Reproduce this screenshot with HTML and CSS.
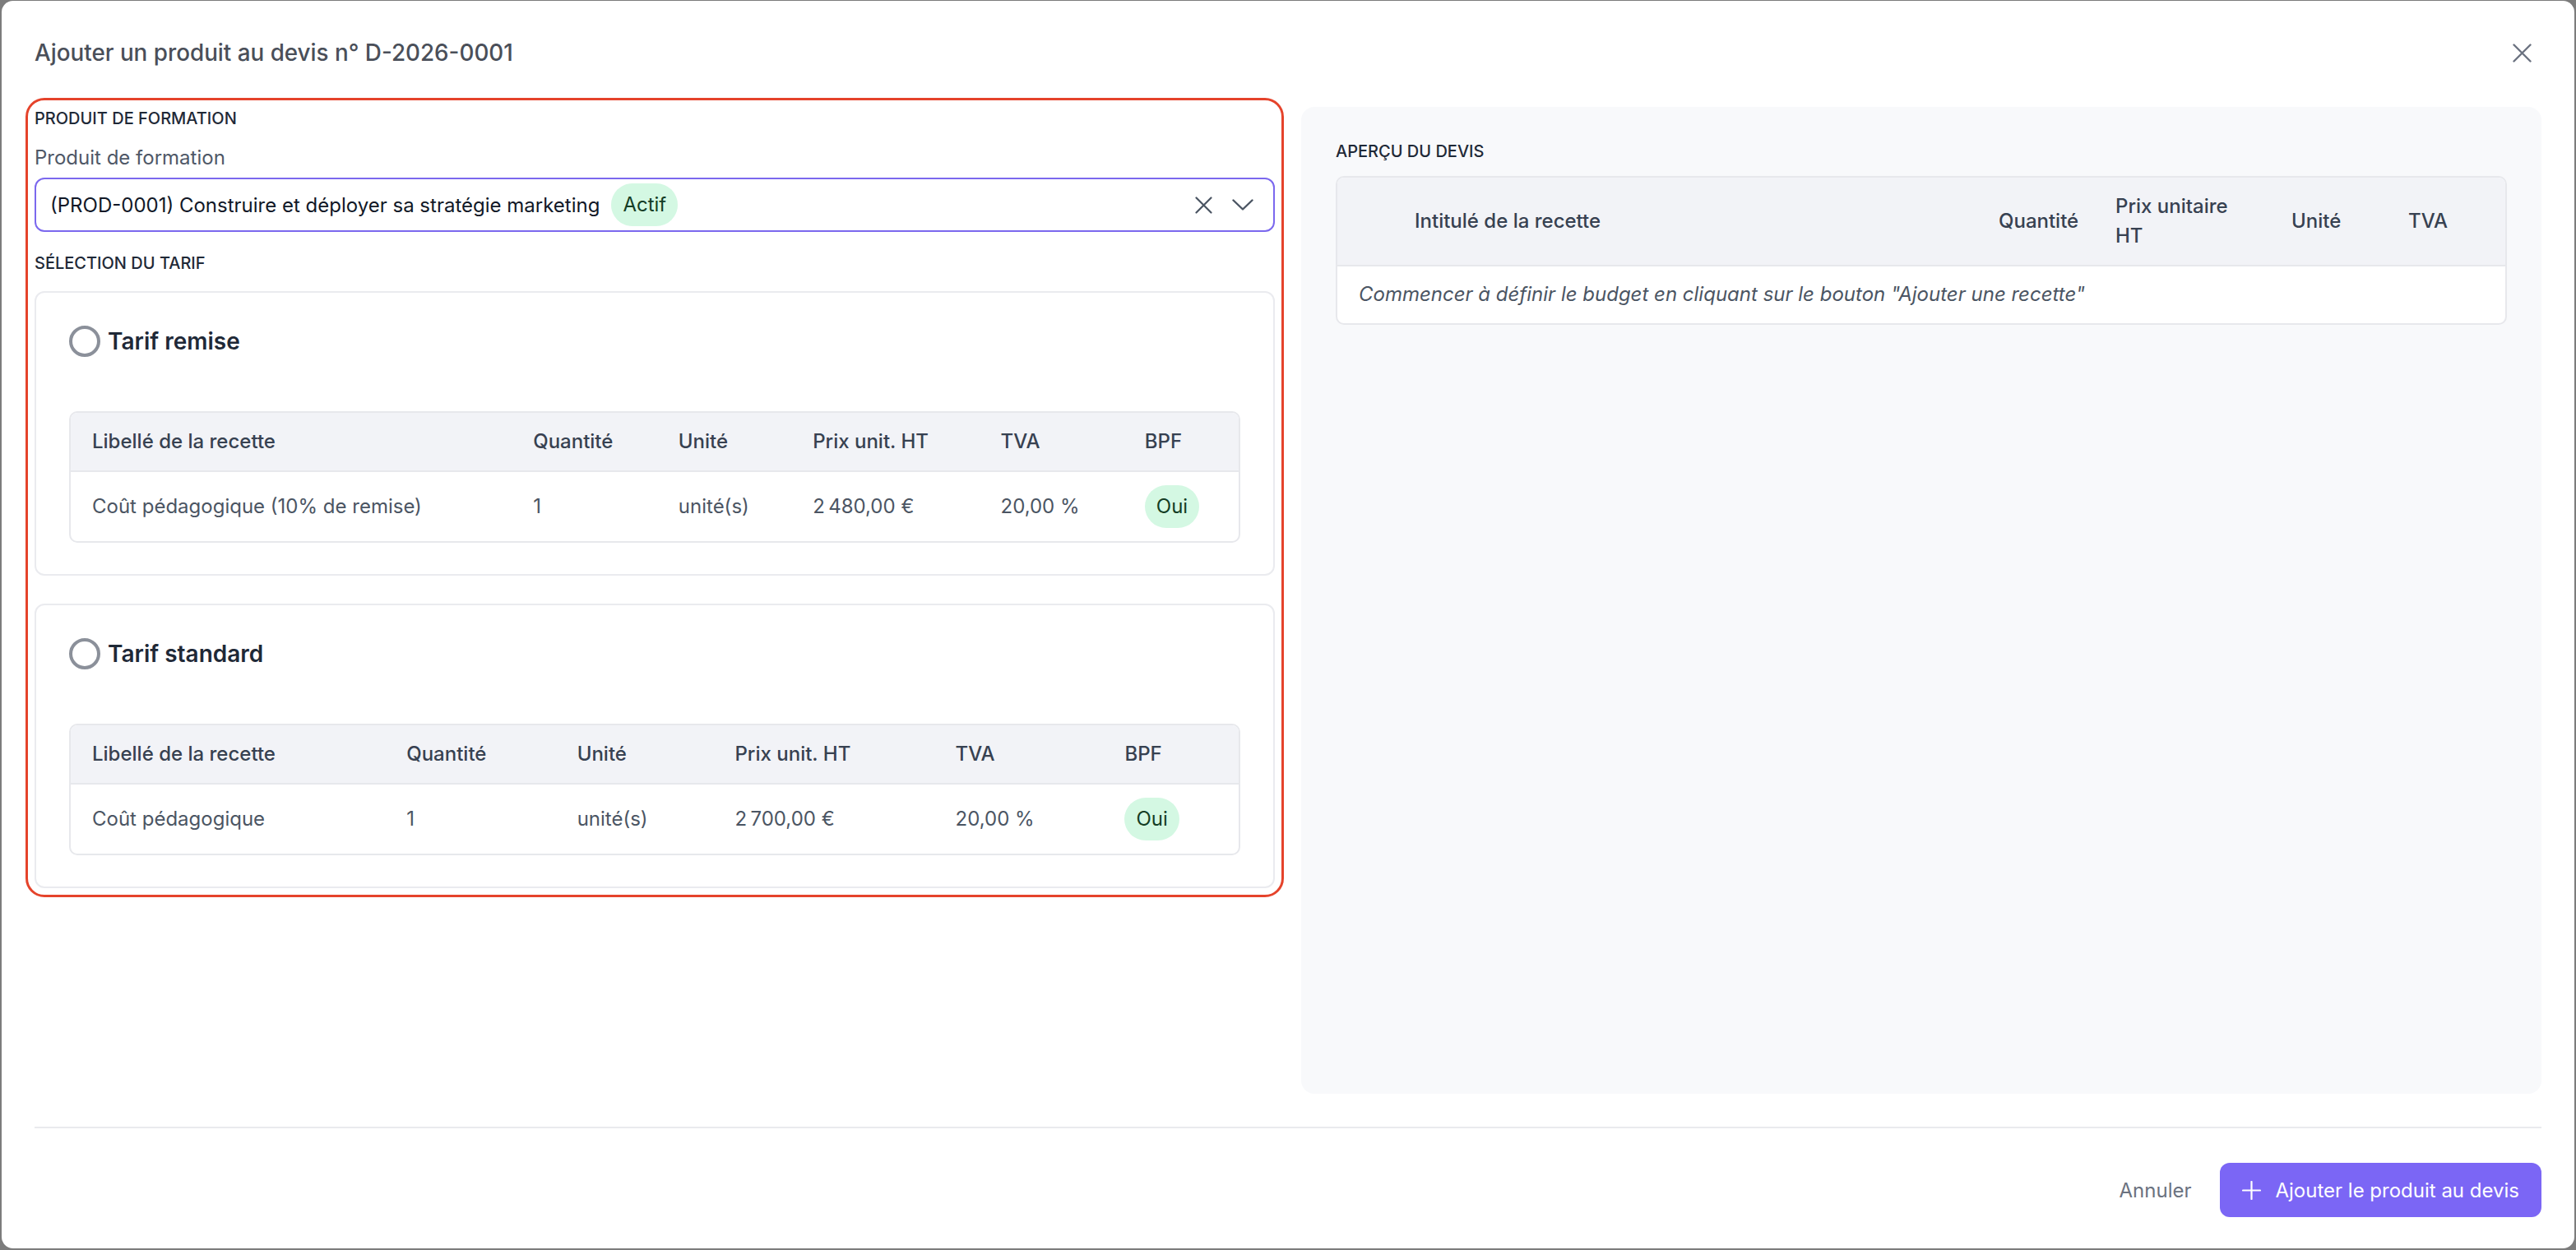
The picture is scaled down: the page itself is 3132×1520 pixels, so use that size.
FILE: index.html
```html
<!DOCTYPE html>
<html lang="fr">
<head>
  <meta charset="UTF-8">
  <meta name="viewport" content="width=device-width, initial-scale=1.0">
  <title>Ajouter un produit au devis</title>
  <link rel="stylesheet" href="styles.css">
</head>
<body>
  <div class="modal">
    <div class="modal-header">
      <h1 class="modal-title">Ajouter un produit au devis n° D-2026-0001</h1>
      <button class="close-btn" aria-label="Fermer">
        <svg width="23" height="23" viewBox="0 0 23 23"><path d="M1.5 1.5L21.5 21.5M21.5 1.5L1.5 21.5" stroke="#6b7280" stroke-width="2.4" stroke-linecap="round" fill="none"/></svg>
      </button>
    </div>

    <div class="modal-body">
      <!-- colonne gauche : produit + tarifs -->
      <div class="left-col">
        <h2 class="section-title">Produit de formation</h2>
        <label class="field-label">Produit de formation</label>
        <div class="select-box">
          <span class="select-value">(PROD-0001) Construire et déployer sa stratégie marketing</span>
          <span class="badge">Actif</span>
          <span class="select-icons">
            <svg width="21" height="21" viewBox="0 0 21 21"><path d="M1.5 1.5L19.5 19.5M19.5 1.5L1.5 19.5" stroke="#4b5563" stroke-width="2.2" stroke-linecap="round" fill="none"/></svg>
            <svg width="26" height="14" viewBox="0 0 26 14"><path d="M1.5 1.5L13 12.5L24.5 1.5" stroke="#4b5563" stroke-width="2.4" stroke-linecap="round" stroke-linejoin="round" fill="none"/></svg>
          </span>
        </div>

        <h2 class="section-title tarif-title">Sélection du tarif</h2>

        <div class="tarif-card">
          <div class="tarif-head">
            <span class="radio"></span>
            <span class="tarif-name">Tarif remise</span>
          </div>
          <div class="table-wrap">
            <table class="data-table">
              <thead>
                <tr>
                  <th>Libellé de la recette</th>
                  <th>Quantité</th>
                  <th>Unité</th>
                  <th>Prix unit. HT</th>
                  <th>TVA</th>
                  <th>BPF</th>
                </tr>
              </thead>
              <tbody>
                <tr>
                  <td>Coût pédagogique (10% de remise)</td>
                  <td>1</td>
                  <td>unité(s)</td>
                  <td>2&#8239;480,00 €</td>
                  <td>20,00 %</td>
                  <td><span class="badge">Oui</span></td>
                </tr>
              </tbody>
            </table>
          </div>
        </div>

        <div class="tarif-card second">
          <div class="tarif-head">
            <span class="radio"></span>
            <span class="tarif-name">Tarif standard</span>
          </div>
          <div class="table-wrap">
            <table class="data-table">
              <thead>
                <tr>
                  <th>Libellé de la recette</th>
                  <th>Quantité</th>
                  <th>Unité</th>
                  <th>Prix unit. HT</th>
                  <th>TVA</th>
                  <th>BPF</th>
                </tr>
              </thead>
              <tbody>
                <tr>
                  <td>Coût pédagogique</td>
                  <td>1</td>
                  <td>unité(s)</td>
                  <td>2&#8239;700,00 €</td>
                  <td>20,00 %</td>
                  <td><span class="badge">Oui</span></td>
                </tr>
              </tbody>
            </table>
          </div>
        </div>
      </div>

      <!-- colonne droite : aperçu -->
      <div class="preview">
        <h2 class="section-title">Aperçu du devis</h2>
        <div class="table-wrap">
          <table class="preview-table">
            <colgroup>
              <col class="c-handle">
              <col>
              <col class="c-small">
              <col class="c-price">
              <col class="c-small">
              <col class="c-small">
            </colgroup>
            <thead>
              <tr>
                <th></th>
                <th class="first">Intitulé de la recette</th>
                <th>Quantité</th>
                <th>Prix unitaire HT</th>
                <th>Unité</th>
                <th>TVA</th>
              </tr>
            </thead>
            <tbody>
              <tr>
                <td colspan="6" class="empty">Commencer à définir le budget en cliquant sur le bouton "Ajouter une recette"</td>
              </tr>
            </tbody>
          </table>
        </div>
      </div>
    </div>

    <div class="modal-footer">
      <button class="btn-cancel">Annuler</button>
      <button class="btn-primary">
        <svg width="23" height="23" viewBox="0 0 23 23"><path d="M11.5 1V22M1 11.5H22" stroke="#fff" stroke-width="2.2" stroke-linecap="round" fill="none"/></svg>
        Ajouter le produit au devis
      </button>
    </div>
  </div>
</body>
</html>
```

FILE: styles.css
```css
/* Base */
body {
  margin: 0;
  background-color: #7c7c7c;
  font-family: Inter, "Noto Sans", Arial, sans-serif;
  color: #1f2937;
}
button {
  font-family: inherit;
  border: none;
  background: none;
  cursor: pointer;
}

/* Modal */
.modal {
  margin: 1px 2px;
  height: 1517px;
  background-color: #fff;
  border-radius: 14px;
  display: flex;
  flex-direction: column;
  box-sizing: border-box;
}
.modal-header {
  display: flex;
  align-items: center;
  justify-content: space-between;
  padding: 43px 52px 0 40px;
  margin-bottom: 46px;
}
.modal-title {
  margin: 0;
  font-size: 27.8px;
  line-height: 40px;
  font-weight: 500;
  color: #4a4f59;
}
.close-btn {
  padding: 0;
  display: flex;
}

.modal-body {
  flex: 1;
  display: grid;
  grid-template-columns: 1fr 1fr;
  gap: 32px;
  padding: 0 40px;
}

/* Left column */
.left-col {
  align-self: start;
  border-radius: 12px;
  outline: 3px solid #e5432b;
  outline-offset: 8px;
}
.section-title {
  margin: 0;
  font-size: 20px;
  line-height: 28px;
  font-weight: 500;
  text-transform: uppercase;
  color: #1f2937;
}
.field-label {
  display: block;
  margin-top: 16px;
  font-size: 24px;
  line-height: 36px;
  color: #4f5867;
}
.select-box {
  margin-top: 6px;
  height: 66px;
  box-sizing: border-box;
  border: 2px solid #7b68ee;
  border-radius: 12px;
  display: flex;
  align-items: center;
  padding: 0 24px 0 17px;
  gap: 14px;
}
.select-value {
  font-size: 24px;
  color: #111827;
}
.select-icons {
  margin-left: auto;
  display: flex;
  align-items: center;
  gap: 24px;
}
.badge {
  display: inline-block;
  vertical-align: middle;
  padding: 8px 14px;
  font-size: 24px;
  line-height: 36px;
  border-radius: 999px;
  background-color: #d4f8e3;
  color: #143d25;
}
.tarif-title {
  margin-top: 24px;
}

.tarif-card {
  margin-top: 20px;
  border: 2px solid #eaebef;
  border-radius: 12px;
  padding: 39px 40px 38px;
}
.tarif-card.second {
  margin-top: 34px;
}
.tarif-head {
  display: flex;
  align-items: center;
  gap: 9px;
  height: 40px;
  margin-bottom: 65px;
}
.radio {
  width: 38px;
  height: 38px;
  box-sizing: border-box;
  border: 4px solid #8b909a;
  border-radius: 50%;
}
.tarif-name {
  font-size: 28px;
  font-weight: 600;
  color: #1f2937;
}

/* Tables */
.table-wrap {
  border: 2px solid #e7e8ec;
  border-radius: 10px;
  overflow: hidden;
  background-color: #fff;
}
.data-table,
.preview-table {
  width: 100%;
  border-collapse: collapse;
  font-size: 24px;
  line-height: 36px;
}
.data-table th,
.preview-table th {
  background-color: #f2f3f7;
  font-weight: 500;
  color: #374151;
  text-align: left;
  border-bottom: 2px solid #e7e8ec;
}
.data-table th,
.data-table td {
  padding: 17px 26px;
  text-align: left;
  white-space: nowrap;
}
.data-table td {
  padding: 16px 26px;
  color: #4b5563;
}

/* Right column */
.preview {
  background-color: #f8f9fb;
  border-radius: 16px;
  padding: 40px 42px;
}
.preview .table-wrap {
  margin-top: 16px;
}
.preview-table {
  table-layout: fixed;
}
.c-handle { width: 68px; }
.c-small { width: 142px; }
.c-price { width: 214px; }
.preview-table th {
  padding: 17px 24px;
}
.preview-table th.first {
  padding-left: 26px;
}
.preview-table td.empty {
  padding: 16px 26px 17px;
  font-style: italic;
  color: #4b5563;
}

/* Footer */
.modal-footer {
  margin: 40px 40px 0;
  border-top: 2px solid #e9eaee;
  padding: 42px 0 38px;
  display: flex;
  justify-content: flex-end;
  align-items: center;
  gap: 17px;
}
.btn-cancel {
  font-size: 24px;
  color: #6b7280;
  padding: 0 18px;
}
.btn-primary {
  height: 66px;
  display: flex;
  align-items: center;
  gap: 17px;
  padding: 0 27px;
  border-radius: 12px;
  background-color: #7b66f5;
  color: #fff;
  font-size: 24px;
}
```
